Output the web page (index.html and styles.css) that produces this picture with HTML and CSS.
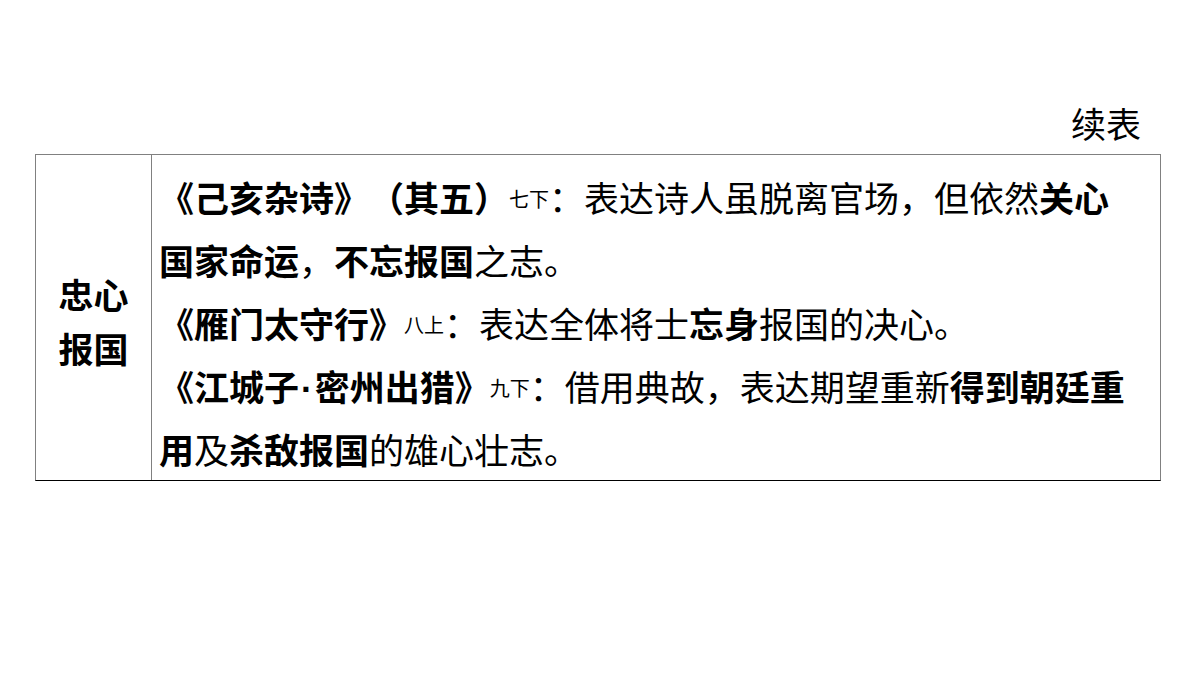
FILE: index.html
```html
<!DOCTYPE html>
<html lang="zh-CN">
<head>
<meta charset="utf-8">
<title>续表</title>
<link rel="stylesheet" href="styles.css">
</head>
<body>
<div class="page">
  <div class="caption">续表</div>
  <div class="table">
    <div class="label">忠心<br>报国</div>
    <div class="content">
      <p class="entry"><b>《己亥杂诗》（其五）</b><span class="grade">七下</span>：表达诗人虽脱离官场，但依然<b>关心国家命运</b>，<b>不忘报国</b>之志。</p>
      <p class="entry"><b>《雁门太守行》</b><span class="grade">八上</span>：表达全体将士<b>忘身</b>报国的决心。</p>
      <p class="entry"><b>《江城子<span class="dot" lang="en">·</span>密州出猎》</b><span class="grade">九下</span>：借用典故，表达期望重新<b>得到朝廷重用</b>及<b>杀敌报国</b>的雄心壮志。</p>
    </div>
  </div>
</div>
</body>
</html>
```
FILE: styles.css
```css
html, body {
  margin: 0;
  padding: 0;
  background: #fff;
}
body {
  font-family: "Noto Sans CJK SC", "Noto Sans", sans-serif;
  color: #000;
  text-spacing-trim: space-all;
  font-kerning: none;
  font-feature-settings: "halt" 0, "chws" 0;
}
.page {
  padding-top: 97px;
  padding-left: 35px;
  width: 1126px;
}
.caption {
  font-size: 35px;
  line-height: 51px;
  text-align: right;
  padding-right: 20px;
  margin-bottom: 6px;
}
.table {
  display: flex;
  border: 1px solid #808080;
  border-bottom-color: #000;
  box-sizing: border-box;
  width: 1126px;
}
.label {
  width: 116px;
  flex: none;
  border-right: 1px solid #808080;
  display: flex;
  align-items: center;
  justify-content: center;
  text-align: center;
  font-size: 35px;
  font-weight: 700;
  line-height: 54px;
  padding-top: 6px;
  box-sizing: border-box;
}
.content {
  flex: 1;
  padding: 10px 24px 0 7px;
  font-size: 35px;
  line-height: 63px;
}
.entry {
  margin: 0;
}
.entry b {
  font-weight: 700;
}
.grade {
  font-size: 20px;
  line-height: 0;
  vertical-align: 5px;
}
.dot {
  font-family: "Liberation Sans", sans-serif;
  font-weight: 700;
  padding: 0 2px;
  line-height: 0;
}
```
